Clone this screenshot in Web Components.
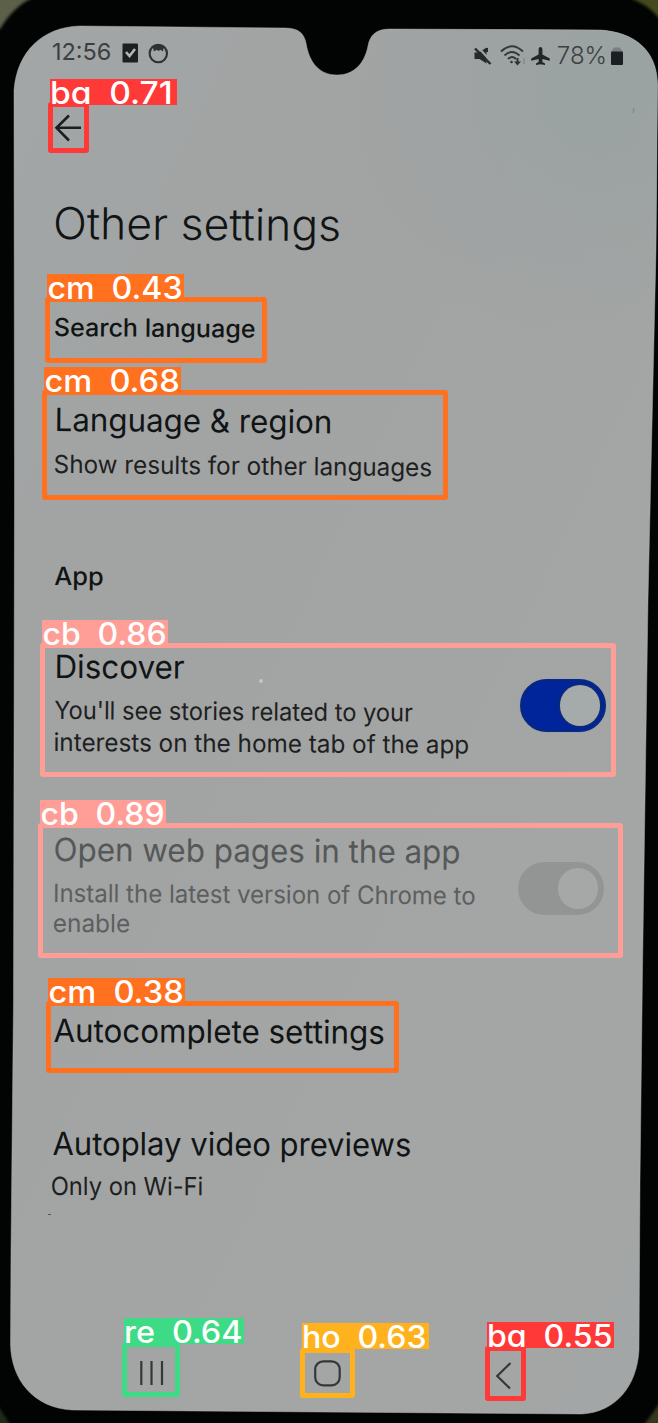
<!DOCTYPE html>
<html lang="en">
<head>
<meta charset="utf-8">
<title>Other settings</title>
<style>
html,body{margin:0;background:#020303}
body{width:658px;height:1423px;overflow:hidden;font-family:Inter,"Liberation Sans",sans-serif;color:#111414}
</style>
</head>
<body>
<phone-frame>
  <status-bar></status-bar>
  <app-bar></app-bar>
  <fit-text size="44" h="60" ink="283" tilt=".4" gap="27.5" x="56" weight="350">Other settings</fit-text>
  <fit-text size="25" h="30" ink="199.5" tilt=".5" gap="59" x="55" weight="450">Search language</fit-text>
  <setting-row gap="58">
    <fit-text size="32" h="40" ink="273" tilt=".5" x="56.5" weight="370">Language &amp; region</fit-text>
    <fit-text size="25" h="30" ink="376" tilt=".5" gap="9" x="55" tone="#1d2020">Show results for other languages</fit-text>
  </setting-row>
  <fit-text size="25" h="30" ink="47.5" tilt=".3" gap="82.5" x="55" weight="450">App</fit-text>
  <setting-row gap="56">
    <fit-text size="32" h="40" ink="127" tilt=".3" x="56.5" weight="370">Discover</fit-text>
    <fit-text size="25" h="30" ink="357.5" tilt=".4" gap="8" x="55" tone="#1d2020">You'll see stories related to your</fit-text>
    <fit-text size="25" h="30" ink="413" tilt=".35" gap="1.5" x="55" tone="#1d2020">interests on the home tab of the app</fit-text>
    <toggle-switch slot="control" on style="margin:-1px 0 0 520px"></toggle-switch>
  </setting-row>
  <setting-row gap="73.5">
    <fit-text size="32" h="40" ink="404" tilt=".33" x="55" tone="#555858" weight="370">Open web pages in the app</fit-text>
    <fit-text size="25" h="30" ink="419.5" tilt=".35" gap="7.5" x="55" tone="#5c5f5f">Install the latest version of Chrome to</fit-text>
    <fit-text size="25" h="30" ink="75" tilt=".2" gap=".5" x="54" tone="#5c5f5f">enable</fit-text>
    <toggle-switch slot="control" style="margin:-1px 0 0 518px"></toggle-switch>
  </setting-row>
  <fit-text size="32" h="40" ink="329.5" tilt=".3" gap="72.5" x="53.5" weight="370">Autocomplete settings</fit-text>
  <setting-row gap="73">
    <fit-text size="32" h="40" ink="357" tilt=".2" x="52.5" weight="370">Autoplay video previews</fit-text>
    <fit-text size="25" h="30" ink="150" tilt=".1" gap="7.5" x="52" tone="#1d2020">Only on Wi-Fi</fit-text>
  </setting-row>
  <nav-bar></nav-bar>
  <detection-box slot="overlay" box="48,102,41,51" tag="50,79,127,26" color="#ff3838" ink="117">ba 0.71</detection-box>
  <detection-box slot="overlay" box="45,297,222,66" tag="47,274,137,26" color="#ff701f" ink="132">cm 0.43</detection-box>
  <detection-box slot="overlay" box="42,390,406,110" tag="44,367,137,26" color="#ff701f" ink="132">cm 0.68</detection-box>
  <detection-box slot="overlay" box="40,643,576,134" tag="42,620,126,26" color="#ff9d97" ink="121">cb 0.86</detection-box>
  <detection-box slot="overlay" box="38,823,585,135" tag="40,800,126,26" color="#ff9d97" ink="121">cb 0.89</detection-box>
  <detection-box slot="overlay" box="46,1001,353,72" tag="48,978,137,26" color="#ff701f" ink="132">cm 0.38</detection-box>
  <detection-box slot="overlay" box="122,1342,58,55" tag="124,1318,120,26" color="#3ddb86" ink="115">re 0.64</detection-box>
  <detection-box slot="overlay" box="300,1348,55,50" tag="302,1323,127,26" color="#ffb21d" ink="121">ho 0.63</detection-box>
  <detection-box slot="overlay" box="485,1346,41,55" tag="487,1322,127,26" color="#ff3838" ink="121">ba 0.55</detection-box>
</phone-frame>
<script>
const shadow = (el, html) => {
  const t = document.createElement('template');
  t.innerHTML = html;
  const root = el.attachShadow({mode: 'open'});
  root.append(t.content.cloneNode(true));
  return root;
};
const pen = document.createElement('canvas').getContext('2d');

// One line of text, stretched horizontally so that its ink spans the given width.
class FitText extends HTMLElement {
  connectedCallback() {
    const a = (n, d) => this.getAttribute(n) ?? d;
    const size = a('size', 25), weight = a('weight', 400), ws = a('word', 0), h = a('h', 30);
    // Measured at ten times the size, so that rounding does not show.
    pen.font = `${weight} ${size * 10}px Inter, "Liberation Sans", sans-serif`;
    pen.wordSpacing = ws * 10 + 'px';
    const m = pen.measureText(this.textContent);
    const s = a('ink', 100) * 10 / (m.actualBoundingBoxLeft + m.actualBoundingBoxRight);
    const shift = m.actualBoundingBoxLeft * s / 10;
    shadow(this, `<style>
      :host{display:block;height:${h}px;margin-top:${a('gap', 0)}px;padding-left:${a('x', 0)}px;
        font-size:${size}px;font-weight:${weight};line-height:${h}px;white-space:pre;color:${a('tone', 'inherit')}}
      span{display:inline-block;word-spacing:${ws}px;transform-origin:0 50%;
        transform:rotate(${a('tilt', 0)}deg) translateX(${shift}px) scaleX(${s})}
    </style><span><slot></slot></span>`);
  }
}

class PhoneFrame extends HTMLElement {
  constructor() {
    super();
    shadow(this, `<style>
      :host{display:block;position:relative;width:658px;height:1423px;overflow:hidden}
      .glass{position:absolute;inset:0}
      main{position:relative;display:flex;flex-direction:column}
    </style>
    <svg class="glass" width="658" height="1423" viewBox="0 0 658 1423">
      <defs>
        <linearGradient id="s" x1="0" y1="0" x2="1" y2="1">
          <stop offset="0" stop-color="#a2a6a6"/><stop offset=".35" stop-color="#a2a3a3"/>
          <stop offset=".7" stop-color="#a4a6a5"/><stop offset="1" stop-color="#a3a6a6"/>
        </linearGradient>
        <radialGradient id="t" gradientUnits="userSpaceOnUse" cx="600" cy="90" r="260">
          <stop offset="0" stop-color="#9aa2a2"/><stop offset="1" stop-color="#9aa2a2" stop-opacity="0"/>
        </radialGradient>
        <filter id="b"><feGaussianBlur stdDeviation="1.5"/></filter>
        <path id="p" d="M80 26 L285 28 C298 28 304 33 306 43 C309 62 319 75 337 75 C355 75 365 62 368 46 C370 35 376 29 390 29 L600 30 C634 32 657 50 657.500 84 L656 250 L648 600 L642.500 970 L640 1180 L639 1350 C637 1386 616 1412 582 1414 L320 1412 L72 1410 C34 1408 11 1380 10.500 1344 L11 1250 L13.500 1000 L14.500 500 L14 90 C17 52 42 27 80 26Z"/>
      </defs>
      <rect width="658" height="1423" fill="#020303"/>
      <g filter="url(#b)">
        <path d="M-4 -4H36C22 2 10 12 0 29H-4Z" fill="#5c6148"/>
        <path d="M632 -4H662V22C654 11 645 4 632 -1Z" fill="#45481f"/>
        <path d="M-4 1402C2 1412 6 1418 12 1427H-4Z" fill="#1f2b14"/>
        <path d="M662 1398C656 1410 650 1417 642 1427H662Z" fill="#34391f"/>
      </g>
      <use href="#p" fill="url(#s)"/><use href="#p" fill="url(#t)"/>
      <use href="#p" fill="none" stroke="#b4b7b7" stroke-opacity=".45"/>
      <circle cx="261" cy="681" r="2" fill="#c3c6c5"/>
      <path d="M48 1214.500h3" stroke="#555"/>
      <path d="M634 108l-1 5" stroke="#868c8c" stroke-width="1.500"/>
    </svg>
    <main><slot></slot></main><slot name="overlay"></slot>`);
  }
}

class StatusBar extends HTMLElement {
  constructor() {
    super();
    shadow(this, `<style>
      :host{display:flex;height:90px;box-sizing:border-box;color:#3b4040}
      .l{display:flex;width:473px;padding-top:36.500px}
      .r{display:flex;padding-top:41px}
      .l fit-text{width:69px} .r fit-text{width:51px}
      svg{display:block}
    </style>
    <div class="l"><fit-text x="53" size="23.500" h="30" ink="57" weight="400">12:56</fit-text>
      <svg width="50" height="30" viewBox="0 0 50 30"><rect x=".5" y="6.500" width="15.500" height="19" rx="1" fill="#1d2021"/>
        <path d="M4 15l3.500 4L13 12" fill="none" stroke="#b4b8b8" stroke-width="2.600"/>
        <circle cx="36.300" cy="16.500" r="8.700" fill="none" stroke="#2d3232" stroke-width="2.100"/>
        <path d="M30.500 9Q36 5.500 42 9L41 14.500L38.500 12.800L36.500 14L34.500 12.800L32 14.500Z" fill="#2d3232"/></svg></div>
    <div class="r"><svg width="84" height="30" viewBox="473 41 84 30">
        <path d="M474.500 52.500h4.500l7.500-5V63.500l-7-4.500h-5Z" fill="#262a2a"/>
        <path d="M477.500 46.500l14 15.500" stroke="#9fa4a4" stroke-width="2.200"/><path d="M475 48.500l15.500 15.500" stroke="#262a2a" stroke-width="2.400"/>
        <path d="M487 48v4" stroke="#262a2a" stroke-width="2"/>
        <g fill="none" stroke="#333838" stroke-width="1.900"><path d="M501 51.500Q512 41 523 51.500M504.500 55.500Q512 48.500 519.500 55.500M508 59Q512 55 516 59"/></g>
        <circle cx="511.500" cy="62" r="1.300" fill="#333"/><path d="M516.500 58v3.500h-2.500l3.500 4 3.500-4h-2.500V58Z" fill="#2d3232"/><path d="M524 64v-6" stroke="#777c7c"/>
        <path d="M540.500 47c1.200 0 1.900 1.200 1.900 2.500v4.900l7.400 4v2.400l-7.400-1.800v3l2.600 1.500v1.500l-4.500-.8-4.500.8v-1.500l2.600-1.500V59l-7.400 1.800v-2.400l7.400-4V49.500c0-1.300.7-2.500 1.900-2.500Z" fill="#222626"/>
      </svg><fit-text x="1" size="23.500" h="30" ink="46.500" weight="350">78%</fit-text>
      <svg width="16" height="30" viewBox="608 41 16 30"><path d="M613 47.500h5.500l3.500 4.500h-12Z" fill="#788084"/><rect x="610" y="51.500" width="12" height="13.500" rx="1" fill="#1b1e22"/></svg></div>`);
  }
}

class AppBar extends HTMLElement {
  constructor() {
    super();
    shadow(this, `<style>:host{display:flex;height:75px;align-items:center;padding-left:54px}</style>
    <svg width="28" height="28" viewBox="0 0 28 28" fill="none" stroke="#1b1e1e" stroke-width="2.600"><path d="M27 13.800H2.500M15 1.500L2.500 13.800L15 26.500"/></svg>`);
  }
}

class SettingRow extends HTMLElement {
  constructor() {
    super();
    shadow(this, `<style>:host{display:grid}.t,.c{grid-area:1/1}.c{padding-top:33px;height:0}</style>
    <div class="t"><slot></slot></div><div class="c"><slot name="control"></slot></div>`);
  }
  connectedCallback() { this.style.marginTop = this.getAttribute('gap') + 'px'; }
}

class ToggleSwitch extends HTMLElement {
  constructor() {
    super();
    shadow(this, `<style>
      :host{display:flex;align-items:center;justify-content:flex-end;box-sizing:border-box;width:86px;height:52.500px;border-radius:27px;padding-right:6px;background:#939494}
      i{width:40.500px;height:40.500px;border-radius:50%;background:#a5a8a6}
      :host([on]){background:#00249a;border:2px solid #0b2879;padding-right:4px;box-shadow:0 0 2px #8a9cc8}
      :host([on]) i{background:#a5aaab;box-shadow:0 0 0 1.500px #12296e}
    </style><i></i>`);
  }
}

class NavBar extends HTMLElement {
  constructor() {
    super();
    shadow(this, `<style>
      :host{display:grid;grid-template-columns:177px 177px 1fr;height:60px;margin-top:142px;padding-left:137px;align-items:center}
      svg{display:block;fill:none;stroke:#343838;stroke-width:2.200}
    </style>
    <svg width="28" height="30"><path d="M4.300 3v24M14.500 3v24M25 3v24"/></svg>
    <svg width="28" height="30"><rect x="1.200" y="3.300" width="24.500" height="24" rx="8"/></svg>
    <svg width="28" height="34"><path d="M19.500 7L6.200 20L19 32.500"/></svg>`);
  }
}

// Outlined region with a filled caption tab, floating over the screen.
class DetectionBox extends HTMLElement {
  connectedCallback() {
    const b = this.getAttribute('box').split(','), t = this.getAttribute('tag').split(',');
    const c = this.getAttribute('color'), text = this.textContent;
    const root = shadow(this, `<style>
      :host{display:block;color:#fff}
      div{position:absolute;box-sizing:border-box}
      .b{left:${b[0]}px;top:${b[1]}px;width:${b[2]}px;height:${b[3]}px;border:5px solid ${c};border-radius:3px}
      .t{left:${t[0]}px;top:${t[1]}px;width:${t[2]}px;height:${t[3]}px;background:${c};font-feature-settings:"cv11"}
    </style><div class="b"></div><div class="t"></div>`);
    const f = document.createElement('fit-text');
    for (const [k, v] of Object.entries({size: 31, h: 27, x: 2, word: 8, weight: 500, ink: this.getAttribute('ink')})) f.setAttribute(k, v);
    f.textContent = text;
    root.querySelector('.t').append(f);
  }
}

customElements.define('fit-text', FitText);
customElements.define('status-bar', StatusBar);
customElements.define('app-bar', AppBar);
customElements.define('setting-row', SettingRow);
customElements.define('toggle-switch', ToggleSwitch);
customElements.define('nav-bar', NavBar);
customElements.define('detection-box', DetectionBox);
customElements.define('phone-frame', PhoneFrame);
</script>
</body>
</html>
